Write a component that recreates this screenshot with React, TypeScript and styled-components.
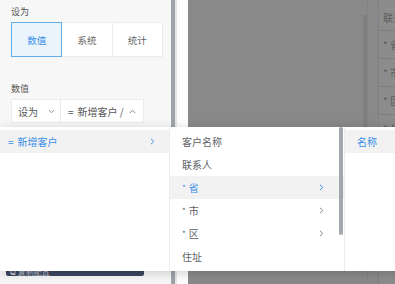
import React from "react";
import styled, { createGlobalStyle } from "styled-components";

const GlobalStyle = createGlobalStyle`
  html, body {
    margin: 0;
    padding: 0;
    background: #fff;
  }
  body {
    font-family: "Noto Sans CJK SC", "Noto Sans", sans-serif;
  }
`;

const blue = "#3a8ee6";

const segments = ["数值", "系统", "统计"];

const level2 = [
  { label: "客户名称", star: false, more: false },
  { label: "联系人", star: false, more: false },
  { label: "省", star: true, more: true, active: true },
  { label: "市", star: true, more: true },
  { label: "区", star: true, more: true },
  { label: "住址", star: false, more: false },
];

const tableRows = ["省", "市", "区", "住"];

function Chevron({ color = "#888", up = false, down = false }: { color?: string; up?: boolean; down?: boolean }) {
  if (up || down) {
    return (
      <svg width="7" height="5" viewBox="0 0 7 5">
        <polyline
          points={up ? "0.8,4 3.5,1.2 6.2,4" : "0.8,1 3.5,3.8 6.2,1"}
          fill="none"
          stroke={color}
          strokeWidth="1"
        />
      </svg>
    );
  }
  return (
    <svg width="5" height="7" viewBox="0 0 5 7">
      <polyline points="1,0.8 3.8,3.5 1,6.2" fill="none" stroke={color} strokeWidth="1" />
    </svg>
  );
}

export default function App() {
  return (
    <Page>
      <GlobalStyle />
      <Panel>
        <Label>设为</Label>
        <Segments>
          {segments.map((s, i) => (
            <Segment key={s} $active={i === 0}>
              {s}
            </Segment>
          ))}
        </Segments>
        <Label $top={26}>数值</Label>
        <SelectRow>
          <SelectBox $width={50}>
            设为
            <Chevron down color="#999" />
          </SelectBox>
          <SelectBox $width={83} $gap={5}>
            <span>
              <Eq>=</Eq>新增客户 /
            </span>
            <Chevron up color="#888" />
          </SelectBox>
        </SelectRow>
        <DarkButton>⧉ 复制配置</DarkButton>
      </Panel>
      <PanelScroll>
        <ScrollThumb />
      </PanelScroll>
      <Gutter />
      <Masked>
        <MaskBody />
        <MaskScroll>
          <MaskThumb />
        </MaskScroll>
        <MaskGap />
        <MaskTable>
          <TableHead>联系人</TableHead>
          {tableRows.map((r) => (
            <TableRow key={r}>* {r}</TableRow>
          ))}
        </MaskTable>
      </Masked>

      <Popup>
        <Column $width={170}>
          <Item $active $padLeft={8} $padRight={14}>
            <span>
              <Eq>=</Eq>新增客户
            </span>
            <Chevron color={blue} />
          </Item>
        </Column>
        <Column $width={175}>
          {level2.map((it) => (
            <Item key={it.label} $active={!!it.active} $padLeft={12} $padRight={20}>
              <span>
                {it.star && <Star>*</Star>}
                {it.label}
              </span>
              {it.more && <Chevron color={it.active ? blue : "#888"} />}
            </Item>
          ))}
          <ListThumb />
        </Column>
        <Column $width={60} $last>
          <Item $active $padLeft={12} $padRight={0}>
            <span>名称</span>
          </Item>
        </Column>
      </Popup>
    </Page>
  );
}

const Page = styled.div`
  position: relative;
  width: 395px;
  height: 284px;
  overflow: hidden;
  display: flex;
`;

const Panel = styled.div`
  width: 171px;
  flex-shrink: 0;
  height: 284px;
  box-sizing: border-box;
  padding: 6px 0 8px 11px;
  background: #f7f7f7;
  display: flex;
  flex-direction: column;
  align-items: flex-start;
`;

const Label = styled.div<{ $top?: number }>`
  font-size: 9px;
  line-height: 12px;
  color: #555;
  margin-top: ${(p) => p.$top ?? 0}px;
  margin-bottom: 4px;
`;

const Segments = styled.div`
  display: flex;
  width: 152px;
  height: 35px;
`;

const Segment = styled.div<{ $active: boolean }>`
  flex: 1;
  display: flex;
  align-items: center;
  justify-content: center;
  font-size: 9.5px;
  color: ${(p) => (p.$active ? blue : "#666")};
  background: ${(p) => (p.$active ? "#e9f4fd" : "#fff")};
  border: 1px solid ${(p) => (p.$active ? "#62aee8" : "#ececec")};
  & + & {
    border-left: none;
  }
`;

const SelectRow = styled.div`
  display: flex;
  height: 24px;
`;

const SelectBox = styled.div<{ $width: number; $gap?: number }>`
  width: ${(p) => p.$width}px;
  box-sizing: border-box;
  display: flex;
  align-items: center;
  gap: ${(p) => p.$gap ?? 10}px;
  padding-left: 6px;
  font-size: 10px;
  color: #555;
  background: #fff;
  border: 1px solid #ececec;
  & + & {
    border-left: none;
    padding-left: 7px;
  }
`;

const Eq = styled.span`
  margin-right: 4px;
`;

const DarkButton = styled.div`
  margin-top: auto;
  margin-left: -5px;
  width: 138px;
  height: 28px;
  box-sizing: border-box;
  padding: 0 0 0 4px;
  display: flex;
  align-items: flex-end;
  font-size: 8px;
  line-height: 9px;
  color: rgba(235, 238, 243, 0.75);
  background: #3b4761;
  border-radius: 2px;
`;

const PanelScroll = styled.div`
  width: 6px;
  flex-shrink: 0;
  background: #e6e6e6;
`;

const ScrollThumb = styled.div`
  width: 4px;
  height: 100%;
  background: #9fa3aa;
`;

const Gutter = styled.div`
  width: 11px;
  flex-shrink: 0;
  background: #fdfdfd;
`;

const Masked = styled.div`
  flex: 1;
  display: flex;
  background: #898989;
`;

const MaskBody = styled.div`
  flex: 1;
`;

const MaskScroll = styled.div`
  width: 4px;
  padding-top: 15px;
`;

const MaskThumb = styled.div`
  height: 112px;
  background: #7f7f7f;
`;

const MaskGap = styled.div`
  width: 10px;
  border-left: 1px solid #838383;
`;

const MaskTable = styled.div`
  width: 16px;
  background: #8c8c8c;
  border-left: 1px solid #808080;
  overflow: hidden;
  white-space: nowrap;
`;

const TableHead = styled.div`
  height: 31px;
  box-sizing: border-box;
  padding: 12px 0 0 4px;
  font-size: 10px;
  line-height: 12px;
  color: #5c5c5c;
  border-bottom: 1px solid #7f7f7f;
`;

const TableRow = styled.div`
  height: 28px;
  box-sizing: border-box;
  padding: 8px 0 0 4px;
  font-size: 10px;
  line-height: 12px;
  color: #5c5c5c;
  border-bottom: 1px solid #7f7f7f;
`;

const Popup = styled.div`
  position: absolute;
  left: 0;
  top: 127px;
  height: 144px;
  width: 405px;
  display: flex;
  background: #fff;
  box-shadow: 0 2px 10px rgba(0, 0, 0, 0.18);
`;

const Column = styled.div<{ $width: number; $last?: boolean }>`
  position: relative;
  width: ${(p) => p.$width}px;
  flex-shrink: 0;
  box-sizing: border-box;
  padding-top: 3px;
  border-right: ${(p) => (p.$last ? "none" : "1px solid #ececec")};
`;

const Item = styled.div<{ $active: boolean; $padLeft: number; $padRight: number }>`
  height: 23px;
  display: flex;
  align-items: center;
  justify-content: space-between;
  padding: 0 ${(p) => p.$padRight}px 0 ${(p) => p.$padLeft}px;
  font-size: 10px;
  color: ${(p) => (p.$active ? blue : "#606266")};
  background: ${(p) => (p.$active ? "#f2f2f2" : "transparent")};
`;

const Star = styled.span`
  font-size: 8px;
  margin-right: 3px;
  vertical-align: 1px;
`;

const ListThumb = styled.div`
  position: absolute;
  right: 1px;
  top: 0;
  width: 4px;
  height: 108px;
  border-radius: 2px;
  background: #a3a7ad;
`;
